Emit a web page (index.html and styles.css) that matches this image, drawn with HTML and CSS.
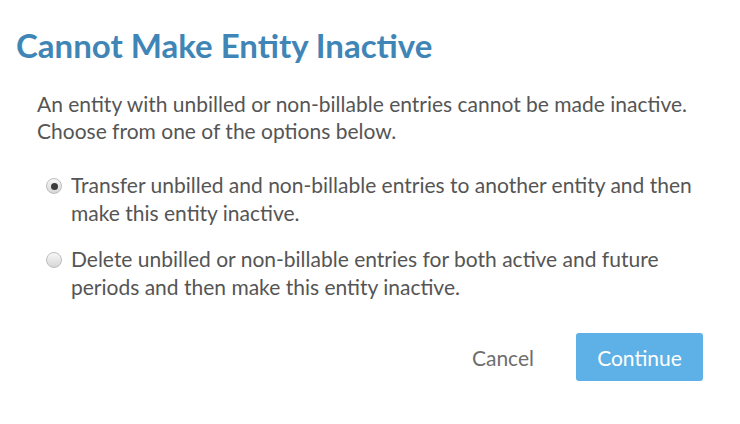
FILE: index.html
```html
<!DOCTYPE html>
<html>
<head>
<meta charset="utf-8">
<link rel="stylesheet" href="styles.css">
</head>
<body>
<div class="dialog">
  <h1 class="title">Cannot Make Entity Inactive</h1>
  <p class="intro">An entity with unbilled or non-billable entries cannot be made inactive. Choose from one of the options below.</p>
  <div class="options">
    <label class="option">
      <span class="radio checked"></span>
      <span class="option-text">Transfer unbilled and non-billable entries to another entity and then make this entity inactive.</span>
    </label>
    <label class="option">
      <span class="radio"></span>
      <span class="option-text">Delete unbilled or non-billable entries for both active and future periods and then make this entity inactive.</span>
    </label>
  </div>
  <div class="actions">
    <button class="btn-cancel">Cancel</button>
    <button class="btn-continue">Continue</button>
  </div>
</div>
</body>
</html>
```
FILE: styles.css
```css
html, body {
  margin: 0;
  padding: 0;
  background: #fff;
}
body {
  font-family: Lato, "Liberation Sans", sans-serif;
  color: #555;
}
.dialog {
  width: 740px;
  height: 424px;
  box-sizing: border-box;
  padding: 23px 37px 0 16px;
}
.title {
  margin: 0;
  font-size: 33px;
  font-weight: 700;
  color: #3f86b7;
  line-height: 44px;
}
.intro {
  margin: 23px 0 0 21px;
  font-size: 21px;
  line-height: 27px;
  width: 670px;
}
.options {
  margin: 27px 0 0 30px;
  display: flex;
  flex-direction: column;
  gap: 18px;
}
.option {
  display: flex;
  align-items: flex-start;
  gap: 9px;
  font-size: 21px;
  line-height: 28px;
}
.option-text {
  width: 640px;
}
.radio {
  flex: none;
  width: 16px;
  height: 16px;
  margin-top: 7px;
  border-radius: 50%;
  border: 1px solid #bdbdbd;
  background: linear-gradient(#f8f8f8, #d6d6d6);
  box-sizing: border-box;
  display: flex;
  align-items: center;
  justify-content: center;
}
.radio.checked::after {
  content: "";
  width: 7px;
  height: 7px;
  border-radius: 50%;
  background: #3c3c3c;
}
.actions {
  margin-top: 32px;
  display: flex;
  justify-content: flex-end;
  align-items: center;
  gap: 42px;
}
.btn-cancel {
  background: none;
  border: 0;
  padding: 0;
  font-family: inherit;
  font-size: 21px;
  color: #6e6e6e;
}
.btn-continue {
  width: 127px;
  height: 48px;
  border: 0;
  border-radius: 3px;
  background: #5eb1e6;
  color: #fff;
  font-family: inherit;
  font-size: 21px;
  padding: 0;
}
```
